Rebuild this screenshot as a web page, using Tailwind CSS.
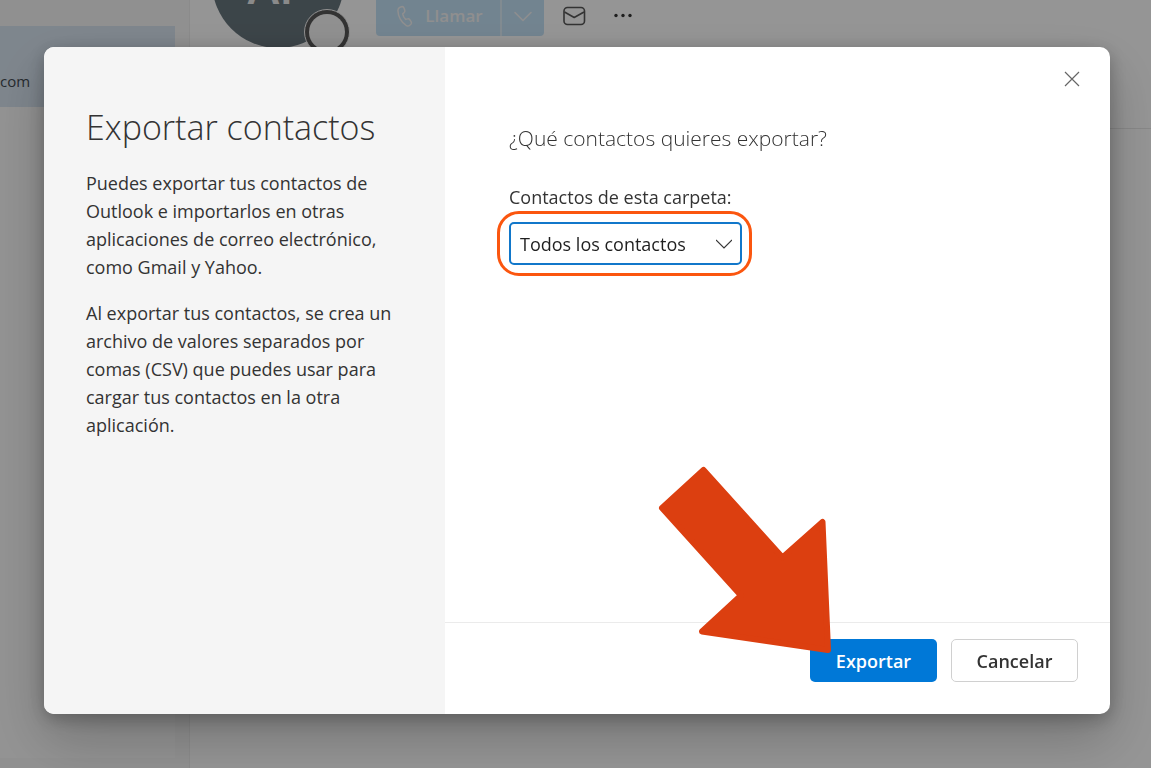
<!DOCTYPE html>
<html lang="es">
<head>
  <meta charset="UTF-8">
  <meta name="viewport" content="width=device-width, initial-scale=1.0">
  <title>Exportar contactos</title>
  <script src="https://cdn.jsdelivr.net/npm/@tailwindcss/browser@4"></script>
</head>
<body class="h-screen overflow-hidden bg-[#f8f8f8] font-['Open_Sans','Noto_Sans',sans-serif] text-[#333]">

  <!-- Contacts page behind the dialog -->
  <div class="flex h-screen">
    <aside class="w-[190px] shrink-0 border-r border-[#e8e8e8] bg-[#f1f1f1] pr-[14px]">
      <div class="flex h-full flex-col">
        <div class="h-[26px] shrink-0"></div>
        <div class="flex h-[81px] shrink-0 items-end bg-[#d3dfeb] pb-[14px]">
          <span class="text-[15px] leading-6 text-[#3f4850]">com</span>
        </div>
        <div class="mb-[10px] grow bg-[#f5f5f5]"></div>
      </div>
    </aside>

    <main class="grow">
      <header class="flex h-[129px] items-start border-b border-[#e2e2e2] pl-[22px]">
        <div class="relative -mt-[84px] flex h-[132px] w-[132px] items-center justify-center rounded-full bg-[#65737a]">
          <span class="pt-2 text-5xl font-semibold text-[#e6e6e6]">AP</span>
          <span class="absolute -right-[6px] -bottom-[7px] h-[46px] w-[46px] rounded-full border border-[#f0f0f0] bg-[#555] p-1">
            <span class="block h-full w-full rounded-full bg-[#f0f0f0]"></span>
          </span>
        </div>

        <div class="ml-8 flex h-9 items-center">
          <div class="flex h-full overflow-hidden rounded-b bg-[#bfdcf0] text-[#eee]">
            <button class="flex w-[126px] items-center justify-center gap-2 border-r-2 border-[#d8e8f2] text-[17px] leading-6 font-semibold">
              <svg class="-mt-1 h-6 w-6" viewBox="0 0 24 24" fill="none" stroke="currentColor" stroke-width="1.5" stroke-linecap="round" stroke-linejoin="round">
                <path d="M7 3.2 8.6 2.7C9.8 2.4 10.6 3 11 4L11.8 6.3C12.1 7.3 11.8 8 11 8.7L9.7 9.9C10 12 11.1 14 12.7 15.4L14.5 14.9C15.4 14.6 16.2 14.9 16.8 15.7L18.1 17.6C18.7 18.6 18.6 19.4 17.9 20.2L16.8 21.2C15.8 22.1 14.6 22.3 13.4 21.6C8.4 18.6 5 12.3 4.9 6.4C4.9 4.8 5.6 3.7 7 3.2Z"/>
              </svg>
              <span class="-mt-1">Llamar</span>
            </button>
            <button class="flex w-[42px] items-center justify-center pb-1" aria-label="Más opciones de llamada">
              <svg class="h-5 w-5" viewBox="0 0 20 20" fill="none" stroke="currentColor" stroke-width="1.5" stroke-linecap="round" stroke-linejoin="round"><path d="m2 6.5 8 8 8-8"/></svg>
            </button>
          </div>
          <button class="ml-[18px] pb-1" aria-label="Correo">
            <svg class="h-6 w-6" viewBox="0 0 24 24" fill="none" stroke="#555" stroke-width="1.6" stroke-linejoin="round">
              <rect x="2" y="3.5" width="20.5" height="17" rx="3.5"/>
              <path d="m2.5 8 9.7 5.5L22 8"/>
            </svg>
          </button>
          <button class="ml-[25px] pb-1" aria-label="Más acciones">
            <svg class="h-6 w-6" viewBox="0 0 24 24" fill="#333"><circle cx="5" cy="11.5" r="1.7"/><circle cx="12" cy="11.5" r="1.7"/><circle cx="19" cy="11.5" r="1.7"/></svg>
          </button>
        </div>
      </header>
    </main>
  </div>

  <!-- Dialog -->
  <div class="fixed inset-0 flex bg-black/40 pt-[47px] pr-[41px] pb-[54px] pl-11">
    <div role="dialog" aria-labelledby="dialog-title" class="relative flex grow rounded-[10px] bg-white shadow-[0_24px_54px_rgba(0,0,0,0.22),0_5px_18px_rgba(0,0,0,0.25)]">

      <section class="w-[401px] shrink-0 rounded-l-[10px] bg-[#f5f5f5] px-[42px] pt-14">
        <h1 id="dialog-title" class="text-[34px] leading-12 font-light whitespace-nowrap">Exportar contactos</h1>
        <p class="mt-[18px] text-lg leading-7">
          Puedes exportar tus contactos de<br>
          Outlook e importarlos en otras<br>
          aplicaciones de correo electrónico,<br>
          como Gmail y Yahoo.
        </p>
        <p class="mt-[18px] text-lg leading-7">
          Al exportar tus contactos, se crea un<br>
          archivo de valores separados por<br>
          comas (CSV) que puedes usar para<br>
          cargar tus contactos en la otra<br>
          aplicación.
        </p>
      </section>

      <section class="flex grow flex-col">
        <div class="flex h-16 justify-end pr-6">
          <button class="h-16 w-7" aria-label="Cerrar">
            <svg class="mx-auto h-4 w-4" viewBox="0 0 16 16" fill="none" stroke="#666" stroke-width="1.2"><path d="m1 1 14 14M15 1 1 15"/></svg>
          </button>
        </div>

        <div class="grow px-16 pt-[11px]">
          <h2 class="text-[21px] leading-8 font-light">¿Qué contactos quieres exportar?</h2>
          <label for="folder" class="mt-[29px] block text-lg leading-7">Contactos de esta carpeta:</label>
          <div class="relative -ml-3 w-[255px] rounded-[22px] border-3 border-[#fb560f] p-2 pl-[9px]">
            <select id="folder" class="block h-[43px] w-[233px] appearance-none rounded-[5px] border-2 border-[#1177ca] bg-white px-[9px] text-lg text-[#1f1f1f] outline-none">
              <option>Todos los contactos</option>
            </select>
            <svg class="pointer-events-none absolute top-[22px] right-[17px] h-4 w-4" viewBox="0 0 16 16" fill="none" stroke="#333" stroke-width="1.1"><path d="m0 4 8 8 8-8"/></svg>
          </div>
        </div>

        <footer class="flex h-[92px] shrink-0 items-start justify-end gap-[14px] border-t border-[#ebebeb] pt-4 pr-8">
          <div class="relative">
            <button class="h-[43px] w-[127px] rounded-[5px] bg-[#0078d7] text-lg font-semibold text-white">Exportar</button>
            <svg class="pointer-events-none absolute right-[105px] bottom-7 h-[188px] w-[175px]" viewBox="657 466 175 188" fill="#dc3f10" stroke="#dc3f10" stroke-width="6" stroke-linejoin="round">
              <path d="M703.5 470 782.5 557.5 822.5 522 828 650 702 631.5 741 595.5 662 508Z"/>
            </svg>
          </div>
          <button class="h-[43px] w-[127px] rounded-[5px] border border-[#d0d0d0] bg-white text-lg font-semibold">Cancelar</button>
        </footer>
      </section>
    </div>
  </div>
</body>
</html>
